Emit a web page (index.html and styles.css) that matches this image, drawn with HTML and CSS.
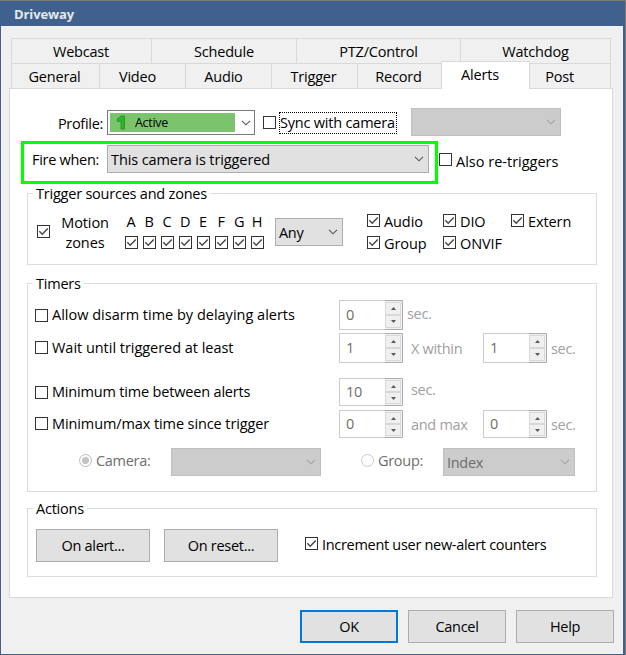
FILE: index.html
```html
<!DOCTYPE html>
<html lang="en">
<head>
<meta charset="utf-8">
<title>Driveway</title>
<link rel="stylesheet" href="styles.css">
</head>
<body>
<svg class="defs" width="0" height="0">
  <symbol id="chev" viewBox="0 0 10 6"><path d="M1 .8 5 4.8 9 .8" fill="none" stroke="currentColor" stroke-width="1.1"/></symbol>
  <symbol id="tick" viewBox="0 0 13 13"><path d="M2.3 6.3 5.2 9.2 10.8 3.6" fill="none" stroke="#444" stroke-width="1.4"/></symbol>
  <symbol id="up" viewBox="0 0 5 3"><path d="M0 3 2.5 0 5 3z" fill="#5a5a5a"/></symbol>
  <symbol id="down" viewBox="0 0 5 3"><path d="M0 0 2.5 3 5 0z" fill="#5a5a5a"/></symbol>
</svg>
<div class="window">
  <div class="title"><span>Driveway</span></div>
  <div class="content">
    <div class="tabs upper">
      <div class="tab">Webcast</div><div class="tab">Schedule</div><div class="tab">PTZ/Control</div><div class="tab">Watchdog</div>
    </div>
    <div class="tabs lower">
      <div class="tab">General</div><div class="tab shift">Video</div><div class="tab shift">Audio</div><div class="tab">Trigger</div><div class="tab">Record</div><div class="tab active">Alerts</div><div class="tab post">Post</div>
    </div>
    <div class="panel">
      <div class="row profile">
        <span class="lead">Profile:</span>
        <div class="combo light"><div class="swatch"><svg width="10" height="15" viewBox="0 0 10 15"><path d="M1 4.2 5.2 1h3.3v13H5V5.6L1.6 6.8z" fill="#2fb52a" stroke="#2a8f27" stroke-width=".9"/></svg><span>Active</span></div><svg class="chev"><use href="#chev"/></svg></div>
        <span class="check"></span><span class="focus">Sync with camera</span>
        <div class="combo off blank"><svg class="chev"><use href="#chev"/></svg></div>
      </div>
      <div class="row fire">
        <div class="highlight">
          <span class="lead">Fire when:</span>
          <div class="combo"><span class="wide">This camera is triggered</span><svg class="chev"><use href="#chev"/></svg></div>
        </div>
        <span class="check"></span><span class="retrig">Also re-triggers</span>
      </div>

      <div class="group sources">
        <div class="legend">Trigger sources and zones</div>
        <span class="check"><svg><use href="#tick"/></svg></span>
        <div class="motion">Motion<br>zones</div>
        <div class="zones">
          <div class="zone">A<span class="check"><svg><use href="#tick"/></svg></span></div>
          <div class="zone">B<span class="check"><svg><use href="#tick"/></svg></span></div>
          <div class="zone">C<span class="check"><svg><use href="#tick"/></svg></span></div>
          <div class="zone">D<span class="check"><svg><use href="#tick"/></svg></span></div>
          <div class="zone">E<span class="check"><svg><use href="#tick"/></svg></span></div>
          <div class="zone">F<span class="check"><svg><use href="#tick"/></svg></span></div>
          <div class="zone">G<span class="check"><svg><use href="#tick"/></svg></span></div>
          <div class="zone">H<span class="check"><svg><use href="#tick"/></svg></span></div>
        </div>
        <div class="combo any"><span>Any</span><svg class="chev"><use href="#chev"/></svg></div>
        <div class="kinds">
          <label><span class="check"><svg><use href="#tick"/></svg></span>Audio</label>
          <label><span class="check"><svg><use href="#tick"/></svg></span>DIO</label>
          <label><span class="check"><svg><use href="#tick"/></svg></span>Extern</label>
          <label><span class="check"><svg><use href="#tick"/></svg></span>Group</label>
          <label><span class="check"><svg><use href="#tick"/></svg></span>ONVIF</label>
        </div>
      </div>

      <div class="group timers">
        <div class="legend">Timers</div>
        <div class="timer r1"><label><span class="check"></span>Allow disarm time by delaying alerts</label>
          <div class="spin"><span>0</span><div class="btns"><i><svg><use href="#up"/></svg></i><i><svg><use href="#down"/></svg></i></div></div>
          <span class="unit raised near">sec.</span></div>
        <div class="timer r2"><label><span class="check"></span>Wait until triggered at least</label>
          <div class="spin"><span>1</span><div class="btns"><i><svg><use href="#up"/></svg></i><i><svg><use href="#down"/></svg></i></div></div>
          <span class="unit">X within</span>
          <div class="spin"><span>1</span><div class="btns"><i><svg><use href="#up"/></svg></i><i><svg><use href="#down"/></svg></i></div></div>
          <span class="unit last">sec.</span></div>
        <div class="timer r3"><label><span class="check"></span>Minimum time between alerts</label>
          <div class="spin"><span>10</span><div class="btns"><i><svg><use href="#up"/></svg></i><i><svg><use href="#down"/></svg></i></div></div>
          <span class="unit raised">sec.</span></div>
        <div class="timer r4"><label><span class="check"></span>Minimum/max time since trigger</label>
          <div class="spin"><span>0</span><div class="btns"><i><svg><use href="#up"/></svg></i><i><svg><use href="#down"/></svg></i></div></div>
          <span class="unit">and max</span>
          <div class="spin"><span>0</span><div class="btns"><i><svg><use href="#up"/></svg></i><i><svg><use href="#down"/></svg></i></div></div>
          <span class="unit last">sec.</span></div>
        <div class="timer r5">
          <label class="camera"><span class="radio on"></span>Camera:</label>
          <div class="combo off"><svg class="chev"><use href="#chev"/></svg></div>
          <label class="grp"><span class="radio"></span>Group:</label>
          <div class="combo off"><span>Index</span><svg class="chev"><use href="#chev"/></svg></div>
        </div>
      </div>

      <div class="group actions">
        <div class="legend">Actions</div>
        <div class="button">On alert...</div>
        <div class="button">On reset...</div>
        <label><span class="check"><svg><use href="#tick"/></svg></span><span class="inc">Increment user new-alert counters</span></label>
      </div>
    </div>
    <div class="footer">
      <div class="button primary">OK</div><div class="button">Cancel</div><div class="button">Help</div>
    </div>
  </div>
</div>
</body>
</html>
```

FILE: styles.css
```css
* { box-sizing: border-box; }
body { margin: 0; width: 626px; height: 655px; overflow: hidden; background: #7b7774; font: 14.5px/20px "Open Sans", "Noto Sans", sans-serif; color: #000; letter-spacing: -0.3px; white-space: nowrap; }
.defs { display: block; position: absolute; }
.window { margin-top: 1px; width: 625px; height: 654px; background: #3f618b; padding: 0 2px 1px 1px; }
.title { height: 25px; padding: 3px 0 0 13px; color: #e4e8ee; font-weight: 700; font-size: 13px; letter-spacing: -0.1px; }
.content { height: 628px; background: #f0f0f0; padding: 12px 10px 0 8px; }

.tabs { display: grid; margin: 0 1px 0 2px; border-left: 1px solid #d9d9d9; }
.upper { grid-template-columns: 140px 145px 164px 150px; height: 25px; letter-spacing: -0.2px; }
.lower { grid-template-columns: 88px 86px 86px 86px 84px 88px 81px; height: 25px; letter-spacing: -0.2px; }
.tab { border-top: 1px solid #d9d9d9; border-right: 1px solid #d9d9d9; text-align: center; padding-top: 3px; }
.upper .tab:first-child { padding-right: 1px; }
.lower .tab { padding-right: 2px; }
.lower .shift { padding-right: 10px; }
.lower .post { padding-right: 21px; }
.lower .active { background: #fff; margin: -2px 0 -1px -1px; padding: 3px 11px 0 0; border-left: 1px solid #d9d9d9; position: relative; }
.panel { height: 510px; background: #fff; border: 1px solid #d9d9d9; padding: 19px 15px 0 17px; }

.row { display: flex; align-items: center; }
.lead { text-align: right; }
.check { flex: none; display: block; width: 13px; height: 13px; border: 1px solid #333; background: #fff; }
.check svg { display: block; width: 13px; height: 13px; margin: -1px; }
.combo { flex: none; display: flex; align-items: center; justify-content: space-between; height: 28px; padding: 0 4px 0 3px; border: 1px solid #adadad; background: #e1e1e1; color: #000; }
.combo > span { position: relative; top: 1px; }
.combo > .wide { letter-spacing: -0.1px; }
.chev { width: 10px; height: 6px; color: #555; flex: none; margin-left: auto; }
.off { background: #ccc; border-color: #bfbfbf; color: #6d6d6d; }
.off .chev { color: #a3a3a3; }

.profile { height: 28px; }
.profile .lead { width: 76px; margin-top: 3px; }
.light { width: 148px; height: 25px; margin: 1px 8px 0 4px; padding: 0 3px 0 2px; background: #fff; border-color: #7a7a7a; }
.swatch { display: flex; align-items: center; width: 125px; height: 19px; padding-left: 6px; background: #7cc36e; font-size: 12.5px; }
.swatch span { margin-left: 9px; }
.focus { width: 118px; height: 22px; margin: 1px 14px 0 3px; border: 1px dotted #000; letter-spacing: -0.2px; }
.blank { width: 150px; }

.fire { margin-top: 5px; height: 43px; margin-left: -6px; }
.highlight { flex: none; width: 417px; height: 43px; border: 3px solid #0f0; display: flex; align-items: flex-start; padding-top: 1px; }
.highlight .lead { width: 75px; padding-top: 5px; }
.highlight .combo { width: 322px; margin-left: 8px; }
.fire .check { margin: -6px 4px 0 1px; }
.retrig { margin-top: -2px; letter-spacing: 0; }

.group { position: relative; border: 1px solid #dcdcdc; }
.legend { position: absolute; left: 5px; top: -10px; padding: 0 3px; background: #fff; letter-spacing: -0.22px; }
.sources { margin-top: 9px; height: 72px; display: flex; align-items: flex-start; }
.sources > .check { margin: 31px 0 0 9px; }
.motion { width: 72px; margin-top: 19px; padding-right: 2px; text-align: center; line-height: 20px; letter-spacing: -0.1px; }
.zones { display: flex; margin: 18px 0 0 0; }
.zone { width: 18px; display: flex; flex-direction: column; align-items: center; }
.zone .check { margin-top: 4px; }
.any { width: 68px; margin: 24px 0 0 9px; }
.kinds { display: grid; grid-template-columns: 76px 68px 60px; grid-auto-rows: 22px; margin: 17px 0 0 24px; letter-spacing: -0.1px; }
label { display: flex; align-items: center; }
.kinds .check { margin: -4px 4px 0 0; }

.timers { margin-top: 18px; height: 209px; padding: 16px 0 0 7px; }
.timer { display: flex; align-items: center; height: 30px; }
.timer > label { width: 304px; flex: none; }
.timer .check { margin: 0 4px 0 0; }
.r1 > label { letter-spacing: 0; }
.r2 { margin-top: 3px; }
.r2 > label { letter-spacing: -0.03px; }
.r3 { margin-top: 15px; height: 28px; }
.r3 > label { letter-spacing: -0.18px; }
.r4 { margin-top: 4px; height: 28px; }
.r4 > label { letter-spacing: -0.1px; }
.r2 .check, .r4 .check { margin-top: -1px; }
.r5 { margin-top: 10px; height: 28px; color: #6d6d6d; }
.spin { width: 64px; height: 100%; flex: none; display: flex; justify-content: space-between; border: 1px solid #ccc; border-right-color: #abadb3; padding-left: 6px; color: #6d6d6d; }
.spin > span { align-self: center; margin-top: -1px; }
.btns { width: 17px; margin: -1px 0; padding: 1px 1px 1px 0; display: flex; flex-direction: column; border-top: 1px solid #abadb3; border-bottom: 1px solid #abadb3; background: #f0f0f0; }
.btns i { flex: 1; display: flex; align-items: center; justify-content: center; border: 1px solid #d9d9d9; }
.btns svg { width: 5px; height: 3px; }
.unit { flex: none; width: 80px; padding: 2px 0 0 8px; color: #a0a0a0; }
.unit.raised { padding-top: 0; margin-top: -4px; }
.unit.near, .unit.last { padding-left: 4px; }
.unit.near { margin-top: -2px; }
.unit.last { width: 40px; }
.radio { width: 13px; height: 13px; border: 1px solid #c8c8c8; border-radius: 50%; flex: none; background: #fff; margin: -2px 4px 0 0; }
.on { border-color: #bbb; background: radial-gradient(circle, #c4c4c4 0 3.2px, #fff 3.9px); }
.timer > .camera { margin: -2px 0 0 44px; width: 92px; }
.timer > .grp { margin: -2px 0 0 40px; width: 82px; }
.r5 .combo { width: 150px; }
.r5 .grp + .combo { width: 132px; }

.actions { margin-top: 16px; height: 69px; display: flex; padding: 20px 0 0 8px; }
.button { width: 114px; height: 33px; border: 1px solid #adadad; background: #e1e1e1; text-align: center; padding-top: 6px; }
.actions .button { margin-right: 14px; }
.actions label { height: 33px; margin-left: 13px; }
.actions .check { margin: -4px 4px 0 0; }
.inc { margin-top: -1px; }
.footer { display: flex; justify-content: flex-end; gap: 10px; margin: 12px -1px 0 0; }
.footer .button { width: 98px; }
.footer .primary { border: 2px solid #0078d7; padding-top: 5px; }
```
